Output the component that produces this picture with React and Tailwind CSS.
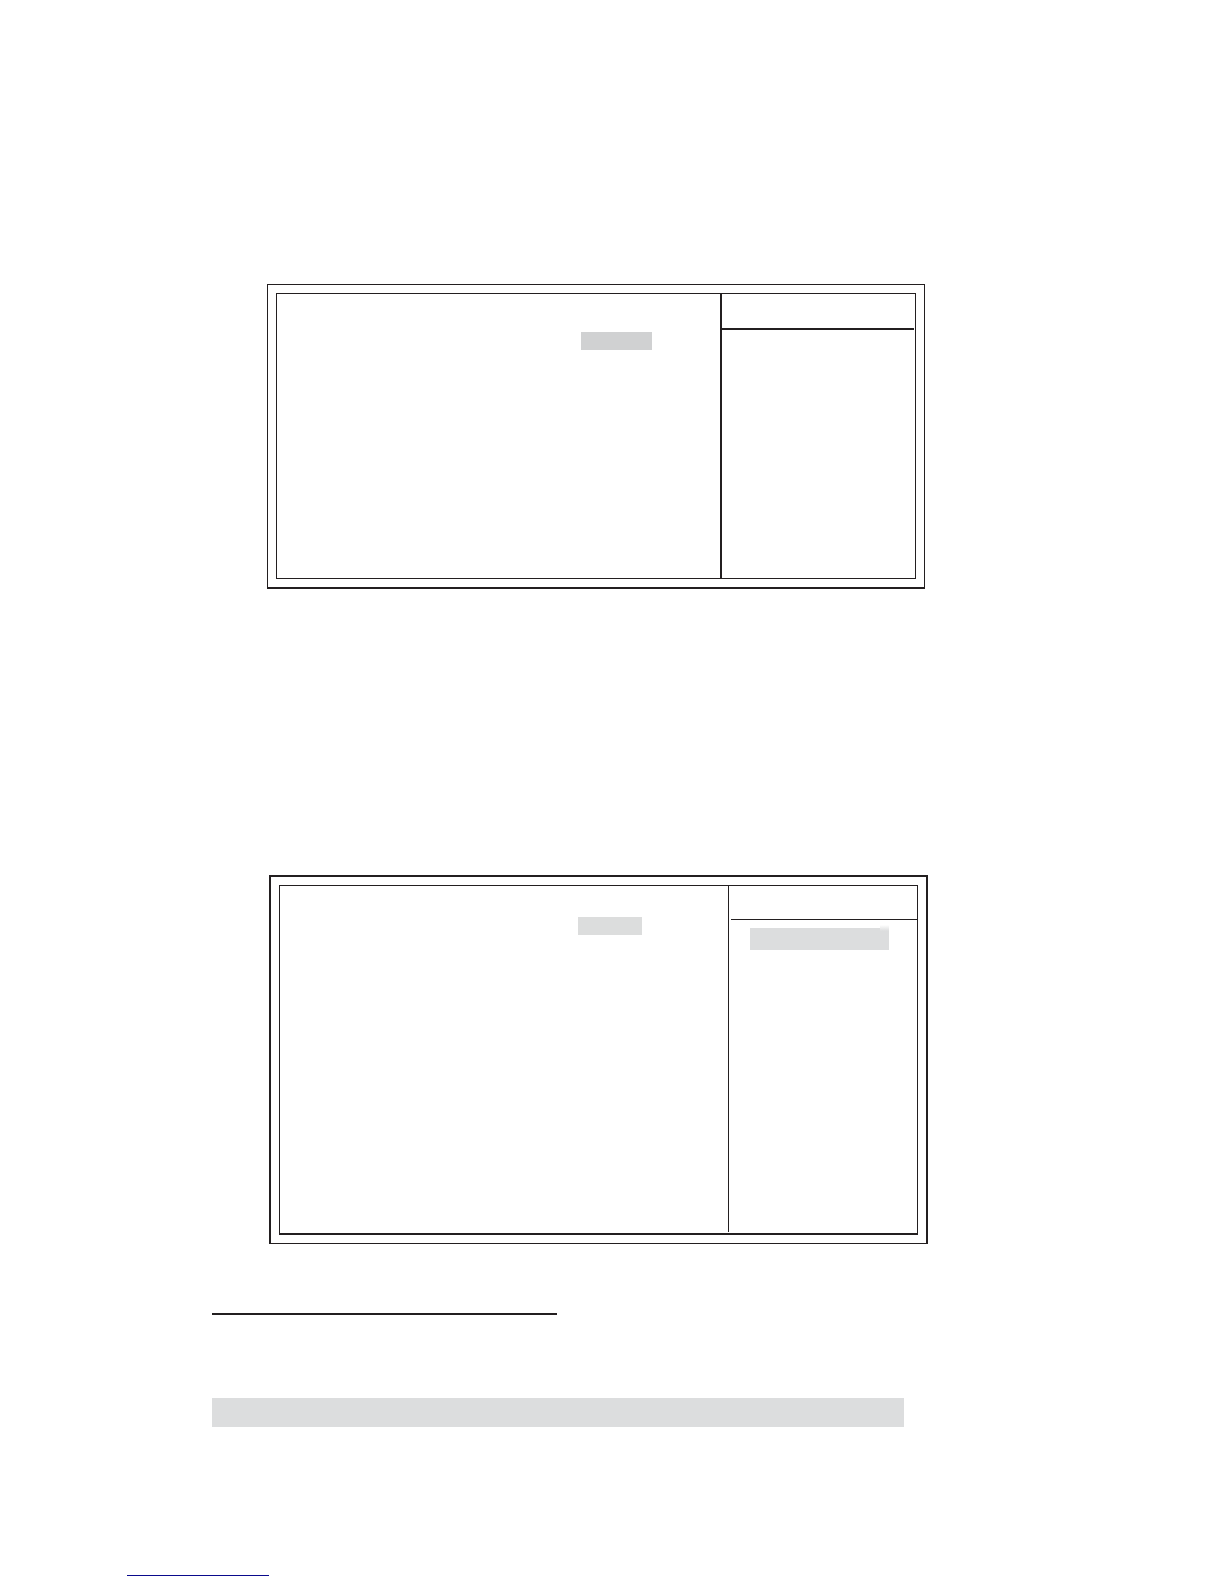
import React from 'react';

const App = () => {
    return (
        <main className="flex flex-col bg-white pt-[284px] pb-2">
            {/* First setup screen */}
            <section className="ml-[267px] mr-[299px] border border-b-2 border-[#231f20] p-2">
                <div className="flex min-h-[286px] border border-[#231f20]">
                    <div className="flex flex-1 items-start justify-end pt-[38px] pr-[68px]">
                        <div className="h-[18px] w-[71px] bg-[#d0d1d2]" />
                    </div>
                    <aside className="w-[195px] border-l-2 border-[#231f20] pr-px">
                        <div className="h-9 border-b-2 border-[#231f20]" />
                    </aside>
                </div>
            </section>

            {/* Second setup screen */}
            <section className="mt-[286px] ml-[269px] mr-[296px] border-2 border-b border-[#231f20] p-2">
                <div className="flex min-h-[350px] border border-b-2 border-[#231f20] pb-px">
                    <div className="flex flex-1 items-start justify-end pt-[31px] pr-[86px]">
                        <div className="h-[18px] w-16 bg-[#dcdddd]" />
                    </div>
                    <aside className="w-[189px] border-l border-[#231f20] pl-[2px]">
                        <div className="h-[34px] border-b border-[#231f20]" />
                        <div className="relative mt-2 mr-7 ml-[19px] h-[22px] bg-[#dcddde]">
                            <span className="absolute -top-[3px] right-0 h-[6px] w-[9px] bg-linear-to-b from-white to-[#dcddde]" />
                        </div>
                    </aside>
                </div>
            </section>

            {/* Section heading rule and table header bar */}
            <section className="mt-[69px] ml-[212px] mr-[320px]">
                <hr className="w-[345px] border-t-2 border-[#231f20]" />
                <div className="mt-[83px] h-[29px] bg-[#dcddde]" />
            </section>

            <footer className="mt-[148px] ml-[127px]">
                <hr className="w-[142px] border-t border-[#0a0a8c]" />
            </footer>
        </main>
    );
};

export default App;
